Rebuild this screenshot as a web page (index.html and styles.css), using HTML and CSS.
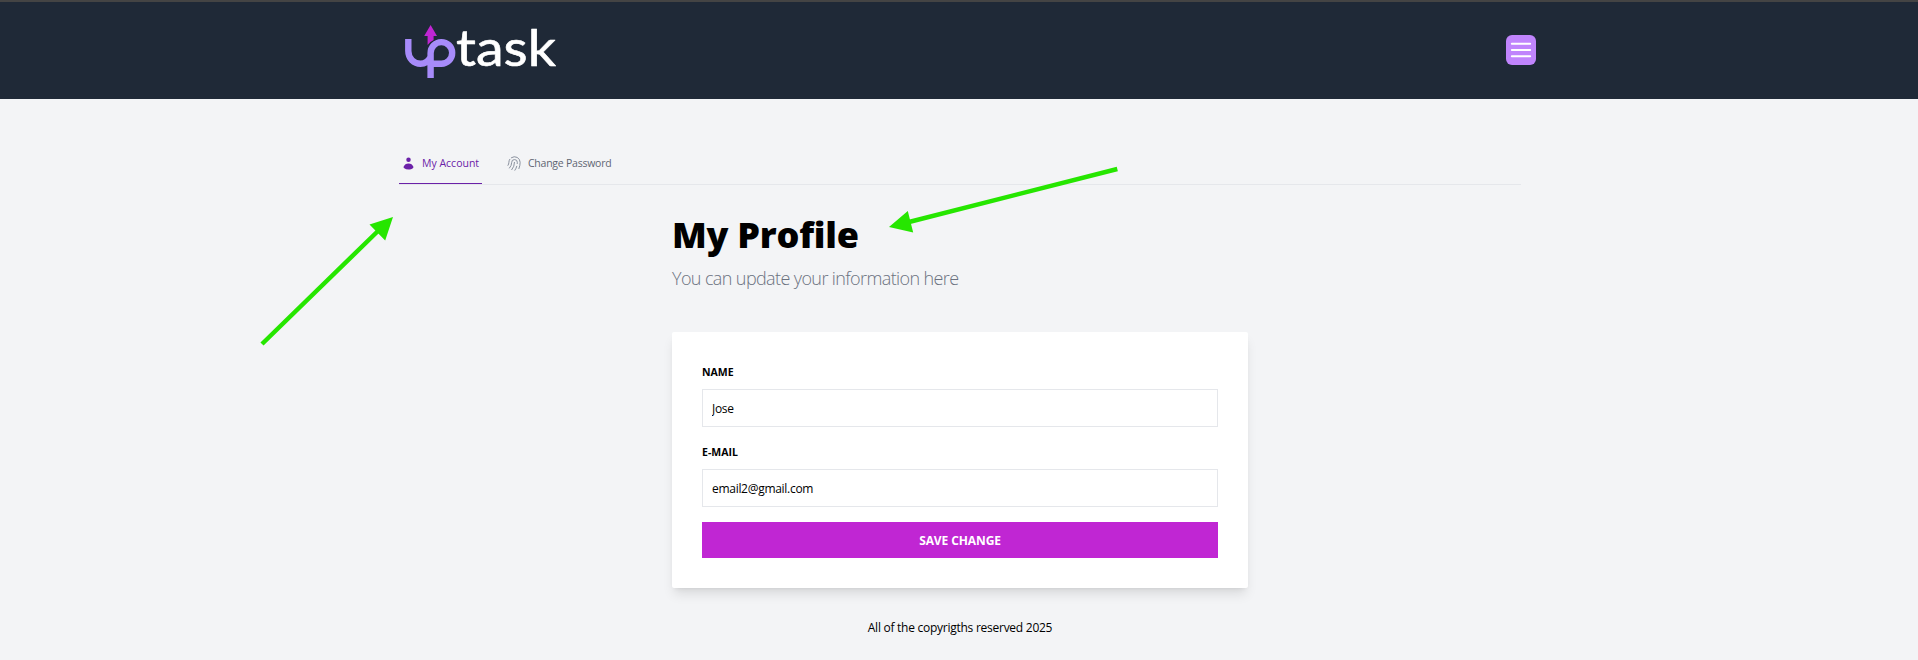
FILE: index.html
```html
<!DOCTYPE html>
<html lang="en">
<head>
<meta charset="utf-8">
<title>UpTask</title>
<link rel="stylesheet" href="styles.css">
</head>
<body>
<header class="header">
  <div class="header-inner">
    <svg class="logo" width="158" height="60" viewBox="402 22 158 60" role="img" aria-label="UpTask">
      <path class="logo-mark" d="M408.300 39V51C408.300 58.500 414 63.700 420.500 63.700C425 63.700 428.500 61 430.600 57M430.600 78V53.200A10.800 10.800 0 1 1 441.400 63.700H430"/>
      <path class="logo-arrow" d="M430.600 25L437 36H433.600V40Q429.500 42 427.600 45V36H424.200Z"/>
      <text class="logo-text" x="456" y="65.500" textLength="100" lengthAdjust="spacingAndGlyphs">task</text>
    </svg>
    <button class="menu" aria-label="Menu">
      <svg width="24" height="24" viewBox="0 0 24 24"><path d="M2.800 5.700H21.200M2.800 12H21.200M2.800 18.300H21.200"/></svg>
    </button>
  </div>
</header>
<main class="main">
  <nav class="tabs">
    <a class="tab active"><svg class="tab-icon" width="15" height="15" viewBox="0 0 20 20"><path fill="currentColor" d="M10 8a3 3 0 1 0 0-6 3 3 0 0 0 0 6ZM3.465 14.493a1.230 1.230 0 0 0 .410 1.412A9.957 9.957 0 0 0 10 18c2.310 0 4.438-.784 6.131-2.100.430-.333.604-.903.408-1.410a7.002 7.002 0 0 0-13.074.003Z"/></svg><span>My Account</span></a>
    <a class="tab password"><svg class="tab-icon finger" width="15" height="15" viewBox="2 2 20 20"><path d="M7.864 4.243A7.500 7.500 0 0 1 19.500 10.500c0 2.920-.556 5.709-1.568 8.268M5.742 6.364A7.465 7.465 0 0 0 4.500 10.500a7.464 7.464 0 0 1-1.150 3.993m1.989 3.559A11.209 11.209 0 0 0 8.250 10.500a3.750 3.750 0 1 1 7.500 0c0 .527-.021 1.049-.064 1.565M12 10.500a14.940 14.940 0 0 1-3.600 9.750m6.633-4.596a18.666 18.666 0 0 1-2.485 5.330"/></svg><span>Change Password</span></a>
  </nav>
  <section class="profile">
    <h1>My Profile</h1>
    <p class="intro">You can update your information here</p>
    <form class="card">
      <label for="name">NAME</label>
      <input id="name" type="text" value="Jose">
      <label for="email">E-MAIL</label>
      <input id="email" type="text" value="email2@gmail.com">
      <button class="save" type="button">SAVE CHANGE</button>
    </form>
  </section>
</main>
<footer class="footer">All of the copyrigths reserved 2025</footer>
<svg class="notes" width="1918" height="660" viewBox="0 0 1918 660" aria-hidden="true">
  <path class="shaft" d="M262 344L378 231M1117.300 169L909 222"/>
  <path class="head" d="M393 217L385.200 240.500L369.500 224.500ZM889 227L907.800 211L913.200 232.500Z"/>
</svg>
</body>
</html>
```

FILE: styles.css
```css
* { box-sizing: border-box; }
body { margin: 0; height: 660px; overflow: hidden; background: #f3f4f6; color: #000; font-family: "Open Sans", sans-serif; font-size: 12px; line-height: 18px; }
.header { height: 99px; background: #1f2937; border-top: 2px solid #444; }
.header-inner { display: flex; justify-content: space-between; align-items: flex-start; width: 1134px; margin: 0 0 0 402px; }
.logo { margin-top: 20px; overflow: visible; }
.logo-mark { fill: none; stroke: #a78bfa; stroke-width: 6.400; }
.logo-arrow { fill: #c026d3; }
.logo-text { font: 50px Lato, sans-serif; fill: #fff; stroke: #fff; stroke-width: .6; stroke-linejoin: round; }
.menu { display: flex; align-items: center; justify-content: center; width: 30px; height: 30px; margin-top: 33px; padding: 0; border: 0; border-radius: 6px; background: #c084fc; }
.menu path { fill: none; stroke: #fff; stroke-width: 1.900; stroke-linecap: round; }
.main { width: 1122px; margin: 0 0 0 399px; padding-top: 48px; }
.tabs { display: flex; gap: 24px; height: 38px; border-bottom: 1px solid #e5e7eb; }
.tab { display: flex; align-items: flex-start; height: 37px; padding: 9px 3px 0 2px; font-size: 10.500px; font-weight: 500; line-height: 15px; color: #5f6673; white-space: nowrap; }
.active { width: 83px; border-bottom: 1px solid #6b21a8; color: #6b21a8; }
.password { padding-left: 1px; letter-spacing: -.24px; }
.tab-icon { flex: none; margin-right: 6px; }
.finger { fill: none; stroke: #878e9b; stroke-width: 1.300; stroke-linecap: round; stroke-linejoin: round; }
.profile { width: 576px; margin: 29px 0 0 273px; }
h1 { margin: 0; font-size: 36px; line-height: 36px; font-weight: 800; letter-spacing: -.25px; padding-top: 3px; white-space: nowrap; }
.intro { margin: 12px 0 0; font-size: 18px; line-height: 27px; font-weight: 300; letter-spacing: -.61px; color: #6b7280; white-space: nowrap; }
.card { display: flex; flex-direction: column; height: 256px; margin-top: 40px; padding: 30px; border-radius: 2px; background: #fff; box-shadow: 0 8px 11px -2px rgba(0,0,0,.1), 0 3px 5px -3px rgba(0,0,0,.1); }
.card label { height: 27px; line-height: 20px; font-size: 10.500px; font-weight: 700; }
.card input { height: 38px; margin: 0 0 15px; padding: 0 9px; border: 1px solid #e5e7eb; border-radius: 0; background: #fff; font: 12px "Open Sans", sans-serif; letter-spacing: -.29px; color: #000; }
.save { height: 36px; padding: 0; border: 0; background: #c026d3; color: #fff; font: 700 12px "Open Sans", sans-serif; letter-spacing: -.1px; }
.footer { margin-top: 31px; padding-left: 2px; text-align: center; letter-spacing: -.26px; }
.notes { position: absolute; inset: 0; pointer-events: none; }
.shaft { fill: none; stroke: #26e600; stroke-width: 4.500; }
.head { fill: #26e600; }
```
